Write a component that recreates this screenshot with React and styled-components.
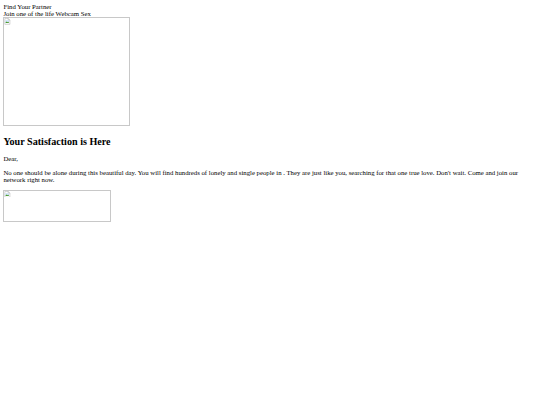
import styled, { createGlobalStyle } from "styled-components";

const GlobalStyle = createGlobalStyle`
  html, body {
    margin: 0;
    padding: 0;
    background: #ffffff;
  }
  body {
    font-family: "Liberation Serif", "Times New Roman", serif;
    color: #000000;
  }
`;

// the reference is a 1280px wide page shrunk down to 540px
const Page = styled.div`
  zoom: 0.421875;
  padding: 8px;
  font-size: 16px;
  line-height: normal;
`;

const Line = styled.div``;

// images sit inline, so the line keeps its descender gap below them
const PictureRow = styled.div``;

const Picture = styled.span`
  display: inline-block;
  vertical-align: baseline;
  box-sizing: border-box;
  width: ${(p) => p.w}px;
  height: ${(p) => p.h}px;
  border: 1px solid #c8c8c8;

  svg {
    display: block;
    width: 16px;
    height: 16px;
  }
`;

const Title = styled.h2`
  font-size: 24px;
  font-weight: bold;
  margin: 19.92px 0;
`;

const Text = styled.p`
  margin: 16px 0;
`;

function BrokenIcon() {
  return (
    <svg viewBox="0 0 16 16">
      <path d="M2 1h8l4 4v10H2z" fill="#ffffff" stroke="#9a9a9a" strokeWidth="1" />
      <path d="M10 1v4h4" fill="none" stroke="#9a9a9a" strokeWidth="1" />
      <rect x="3" y="5" width="9" height="7" fill="#cfe3f5" />
      <path d="M3 12l3-4 2 2 2-1 2 3z" fill="#4c9a2a" />
    </svg>
  );
}

function App() {
  return (
    <>
      <GlobalStyle />
      <Page>
        <Line>Find Your Partner</Line>
        <Line>Join one of the life Webcam Sex</Line>
        <PictureRow>
          <Picture w={300} h={258}>
            <BrokenIcon />
          </Picture>
        </PictureRow>
        <Title>Your Satisfaction is Here</Title>
        <Text>Dear,</Text>
        <Text>
          No one should be alone during this beautiful day. You will find
          hundreds of lonely and single people in . They are just like you,
          searching for that one true love. Don't wait. Come and join our
          network right now.
        </Text>
        <PictureRow>
          <Picture w={256} h={78}>
            <BrokenIcon />
          </Picture>
        </PictureRow>
      </Page>
    </>
  );
}

export default App;
